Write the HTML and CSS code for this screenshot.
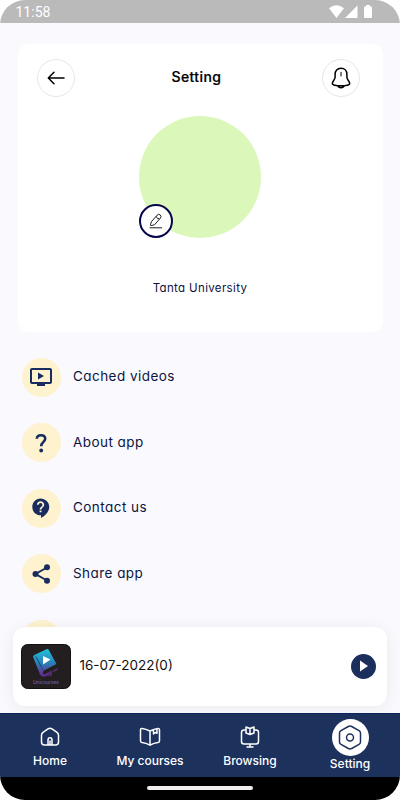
FILE: index.html
```html
<!DOCTYPE html>
<html lang="en">
<head>
    <meta charset="UTF-8">
    <meta name="viewport" content="width=device-width, initial-scale=1">
    <title>Setting</title>
    <link rel="stylesheet" href="styles.css">
</head>
<body>
<div class="phone">
    <!-- status bar -->
    <div class="status-bar">
        <span class="clock">11:58</span>
        <svg class="status-icons" width="46" height="14" viewBox="0 0 46 14">
            <path d="M0 3.2Q7.5-2.5 15 3.2L7.5 13z"/>
            <path d="M16 13L28.5 .5V13z"/>
            <path d="M37 0h4v1.5h1q1 0 1 1V12q0 1-1 1h-6q-1 0-1-1V2.500q0-1 1-1h1z"/>
        </svg>
    </div>

    <main class="content">
        <!-- profile card -->
        <section class="profile-card">
            <header class="card-header">
                <button class="round-btn" aria-label="Back">
                    <svg width="18" height="14" viewBox="0 0 18 14"><path d="M17 7H1.500M7 1.300L1.300 7L7 12.700"/></svg>
                </button>
                <h1>Setting</h1>
                <button class="round-btn" aria-label="Notifications">
                    <svg width="20" height="22" viewBox="0 0 20 22"><path d="M10 1.200C6.200 1.200 4.100 4 4.100 7.200V10.200C4.100 12.500 1.300 14.400 1.300 16.600C1.300 17.300 1.800 17.700 2.700 17.900C7 19 13 19 17.300 17.900C18.200 17.700 18.700 17.300 18.700 16.600C18.700 14.400 15.900 12.500 15.900 10.200V7.200C15.900 4 13.800 1.200 10 1.200zM7 18.800C7.600 21.300 12.400 21.300 13 18.800"/><path class="clapper" d="M10 5.300V9"/></svg>
                </button>
            </header>
            <div class="avatar">
                <button class="edit-btn" aria-label="Edit photo">
                    <svg width="14" height="16" viewBox="0 0 14 16"><path d="M2.300 8.800L8.100 2.200Q9.600.5 11.200 1.900Q12.900 3.400 11.400 5.100L5.600 11.700L2.200 12.600Q1.400 12.800 1.500 11.900zM7.200 3.300Q8 6.100 10.600 6M.7 14.800H13"/></svg>
                </button>
            </div>
            <p class="university">Tanta University</p>
        </section>

        <!-- menu -->
        <ul class="menu">
            <li>
                <span class="menu-icon"><svg width="24" height="24" viewBox="0 0 24 24"><path d="M21 3H3c-1.110 0-2 .89-2 2v12c0 1.100.89 2 2 2h5v2h8v-2h5c1.100 0 2-.9 2-2V5c0-1.110-.9-2-2-2zm0 14H3V5h18v12zM9 7.500v7l6-3.500z"/></svg></span>
                <span class="menu-label">Cached videos</span>
            </li>
            <li>
                <span class="menu-icon"><svg width="24" height="24" viewBox="0 0 24 24"><path class="question" d="M7.800 7.700Q8 4.200 12 4.200Q16.200 4.200 16.200 7.800C16.200 10.800 12.200 11.100 12.200 15.200"/><circle cx="12.200" cy="19.500" r="1.900"/></svg></span>
                <span class="menu-label">About app</span>
            </li>
            <li>
                <span class="menu-icon"><svg width="22" height="22" viewBox="0 0 24 24"><path d="M11.500 1.500C6.260 1.500 2.500 5.600 2.500 10.700S6.260 20 11.500 20h.5v2.800c4.860-2.340 9-6.800 9-12.100C21 5.500 16.740 1.500 11.500 1.500zm1 15.200h-2v-2h2v2zm.4-4.190c-.22.33-.4.71-.4 1.190h-2c0-2.900 3-3 3-5.100C13.500 7.300 12.700 6.500 11.500 6.500s-2 .9-2 2h-2c0-2.210 1.790-4 4-4s4 1.790 4 4c0 2-1.500 2.300-2.600 4.010z"/></svg></span>
                <span class="menu-label">Contact us</span>
            </li>
            <li>
                <span class="menu-icon"><svg width="24" height="24" viewBox="0 0 24 24"><path class="links" d="M18 5.500L6.500 12L18 18.500"/><circle cx="18" cy="5.200" r="3"/><circle cx="6.500" cy="12" r="3"/><circle cx="18" cy="18.800" r="3"/></svg></span>
                <span class="menu-label">Share app</span>
            </li>
            <li>
                <span class="menu-icon"></span>
            </li>
        </ul>
    </main>

    <!-- mini player, floats over the menu -->
    <div class="player">
        <svg class="thumb" width="50" height="45" viewBox="0 0 50 45">
            <defs>
                <linearGradient id="book" x1="0" y1="0" x2="0" y2="1">
                    <stop offset="0" stop-color="#21c3da"/>
                    <stop offset=".55" stop-color="#2c79b5"/>
                    <stop offset=".85" stop-color="#65379b"/>
                    <stop offset="1" stop-color="#5b2b8c"/>
                </linearGradient>
            </defs>
            <rect x=".5" y=".5" width="49" height="44" rx="6" fill="#231f20" stroke="#111"/>
            <path fill="url(#book)" d="M12.500 14Q11.300 12 13.300 11L25.500 5.300Q27 4.700 27.800 6.100L35.500 20L23 26.500Q21 28 22 29.500Q23 31 25 29.700L27 28.700V31L24 32.500Q20.700 33.500 19 30.500z"/>
            <path class="spine" d="M14.800 12.500L22 26"/>
            <path fill="#542a78" d="M26.500 28.500L31 26.300V32.500L29 31L26.500 33zM32 26.500L36.500 24V26L32 28.500z"/>
            <path fill="#fff" d="M22 12V20.500L29.500 15.500z"/>
            <text x="25" y="40" text-anchor="middle" textLength="26">Unicourses</text>
        </svg>
        <span class="track">16-07-2022(0)</span>
        <button class="play-btn" aria-label="Play">
            <svg width="8" height="12" viewBox="0 0 8 12"><path d="M0 .5L8 6L0 11.500z"/></svg>
        </button>
    </div>

    <!-- bottom navigation -->
    <nav class="tab-bar">
        <a class="tab">
            <svg width="20" height="20" viewBox="0 0 20 20"><path d="M1.500 8.300Q1.500 6.500 3 5.300L8 1.900Q10 .7 12 1.900L17 5.300Q18.500 6.500 18.500 8.300V15Q18.500 18 15.500 18H4.500Q1.500 18 1.500 15zM8 18V13Q8 10.800 10 10.800T12 13V18M10 13.500V17.500"/></svg>
            <span>Home</span>
        </a>
        <a class="tab">
            <svg width="22" height="20" viewBox="0 0 22 20"><path d="M11 4Q7 2 3 1.500Q1.500 1.400 1.500 3V13.700Q1.500 15.400 3 15.600Q7 16 11 18.200Q15 16 19 15.600Q20.500 15.400 20.500 13.700V3Q20.500 1.400 19 1.500Q15 2 11 4zV18M14.500 2.800V7L16.300 5.500L18 6.200V1.800"/></svg>
            <span>My courses</span>
        </a>
        <a class="tab">
            <svg width="20" height="22" viewBox="0 0 20 22"><path d="M6 4H4Q1.500 4 1.500 6.500V15.500Q1.500 18 4 18H16Q18.500 18 18.500 15.500V6.500Q18.500 4 16 4H14M10 18V21M6.500 21H13.500M6 1L10 2.500L14 1V7L10 8.500L6 7zM10 2.500V8.500"/></svg>
            <span>Browsing</span>
        </a>
        <a class="tab active">
            <span class="active-icon">
                <svg width="24" height="25" viewBox="0 0 24 25"><path d="M10.300 1.500Q12 .7 13.700 1.500L21 5.600Q22.500 6.500 22.500 8V17Q22.500 18.500 21 19.400L13.700 23.500Q12 24.300 10.300 23.500L3 19.400Q1.500 18.500 1.500 17V8Q1.500 6.500 3 5.600z"/><circle cx="12" cy="12.500" r="3.500"/></svg>
            </span>
            <span>Setting</span>
        </a>
    </nav>
    <div class="gesture-bar"><span></span></div>
</div>
</body>
</html>
```
FILE: styles.css
```css
* {
    box-sizing: border-box;
}

body {
    margin: 0;
    background: #fff;
    font-family: Inter, "Open Sans", sans-serif;
    font-feature-settings: "cv11";
    color: #0d1440;
}

button {
    display: flex;
    align-items: center;
    justify-content: center;
    padding: 0;
    border: none;
    border-radius: 50%;
    background: #fff;
}

.phone {
    position: relative;
    display: flex;
    flex-direction: column;
    width: 400px;
    height: 800px;
    overflow: hidden;
    border-radius: 25px;
    background: #f9f9fe;
}

/* status bar */
.status-bar {
    display: flex;
    flex: none;
    align-items: center;
    justify-content: space-between;
    height: 23px;
    padding: 1px 25px 0 15.500px;
    background: #bababb;
}

.clock {
    font: 14px Roboto, sans-serif;
    color: #fff;
}

.status-icons {
    fill: #fff;
}

/* profile card */
.content {
    flex: 1;
    min-height: 0;
    overflow: hidden;
    padding: 21px 17.500px 0;
}

.profile-card {
    display: flex;
    flex-direction: column;
    align-items: center;
    height: 287.500px;
    padding: 14.500px 22.500px 0 19.500px;
    border-radius: 10px;
    background: #fff;
}

.card-header {
    display: flex;
    align-items: center;
    justify-content: space-between;
    width: 100%;
}

.card-header h1 {
    width: 52px;
    margin: 0 0 2px -2px;
    font-size: 14px;
    font-weight: 500;
    letter-spacing: 0.4px;
    line-height: 20px;
    white-space: nowrap;
    color: #000;
    -webkit-text-stroke: 0.2px #000;
}

.round-btn {
    width: 38px;
    height: 38px;
    border: 1px solid #e6e6e6;
}

.round-btn svg {
    fill: none;
    stroke: #000;
    stroke-width: 1.5;
    stroke-linecap: round;
    stroke-linejoin: round;
}

.round-btn .clapper {
    stroke-width: 1;
}

.avatar {
    position: relative;
    width: 122px;
    height: 122px;
    margin: 19.500px 0 0 3px;
    border-radius: 50%;
    background: #dbf7b9;
}

.edit-btn {
    position: absolute;
    left: 0;
    bottom: 0;
    width: 34px;
    height: 34px;
    border: 2px solid #06064a;
}

.edit-btn svg {
    fill: none;
    stroke: #222;
    stroke-width: 1;
}

.university {
    margin: 41px 0 0 3px;
    font-size: 11.500px;
    letter-spacing: 0.35px;
    line-height: 18px;
}

/* menu */
.menu {
    display: flex;
    flex-direction: column;
    gap: 26.500px;
    margin: 26px 0 0 4.500px;
    padding: 0;
    list-style: none;
}

.menu li {
    display: flex;
    align-items: center;
    gap: 12.500px;
}

.menu-icon {
    display: flex;
    align-items: center;
    justify-content: center;
    width: 38.500px;
    height: 39px;
    border-radius: 50%;
    background: #fff2cf;
}

.menu-icon svg {
    fill: #182c5d;
}

.menu-icon .question,
.menu-icon .links {
    fill: none;
    stroke: #182c5d;
    stroke-width: 2.6;
}

.menu-icon .links {
    stroke-width: 2;
}

.menu-label {
    margin-bottom: 2px;
    font-size: 13.500px;
    letter-spacing: 0.45px;
    line-height: 20px;
}

/* mini player */
.player {
    position: absolute;
    left: 12.500px;
    right: 13px;
    bottom: 94.500px;
    display: flex;
    align-items: center;
    height: 78.500px;
    padding: 0 11px 0 8.500px;
    border-radius: 12px;
    background: #fff;
    box-shadow: 0 2px 16px rgba(0, 0, 0, 0.07);
}

.thumb text {
    font: 600 5px Inter, sans-serif;
    fill: #62568a;
}

.thumb .spine {
    fill: none;
    stroke: #174b68;
    stroke-width: 1;
}

.track {
    flex: 1;
    margin: 0 0 2px 8.500px;
    font-size: 13.500px;
    color: #111;
}

.play-btn {
    width: 25.500px;
    height: 25.500px;
    background: #1c2f5c;
}

.play-btn svg {
    margin-left: 2px;
    fill: #fff;
}

/* bottom navigation */
.tab-bar {
    z-index: 1;
    display: grid;
    flex: none;
    grid-template-columns: repeat(4, 1fr);
    height: 63.500px;
    border-top: 1px solid #0b225a;
    background: #1d315d;
}

.tab {
    display: flex;
    flex-direction: column;
    align-items: center;
    justify-content: space-between;
    padding: 13px 0 10.500px;
    font-size: 12px;
    font-weight: 500;
    line-height: 15px;
    color: #fff;
}

.tab svg {
    fill: none;
    stroke: #fff;
    stroke-width: 1.5;
    stroke-linejoin: round;
}

.tab:nth-child(3) {
    padding-top: 12px;
}

.tab.active {
    padding: 5px 0 7px;
}

.active-icon {
    display: flex;
    align-items: center;
    justify-content: center;
    width: 37px;
    height: 37px;
    border-radius: 50%;
    background: #fff;
}

.tab .active-icon svg {
    stroke: #1d315d;
}

.gesture-bar {
    display: flex;
    flex: none;
    justify-content: center;
    height: 23.500px;
    padding-top: 9.500px;
    background: #000;
}

.gesture-bar span {
    width: 106px;
    height: 4px;
    border-radius: 2px;
    background: #eee;
}
```
